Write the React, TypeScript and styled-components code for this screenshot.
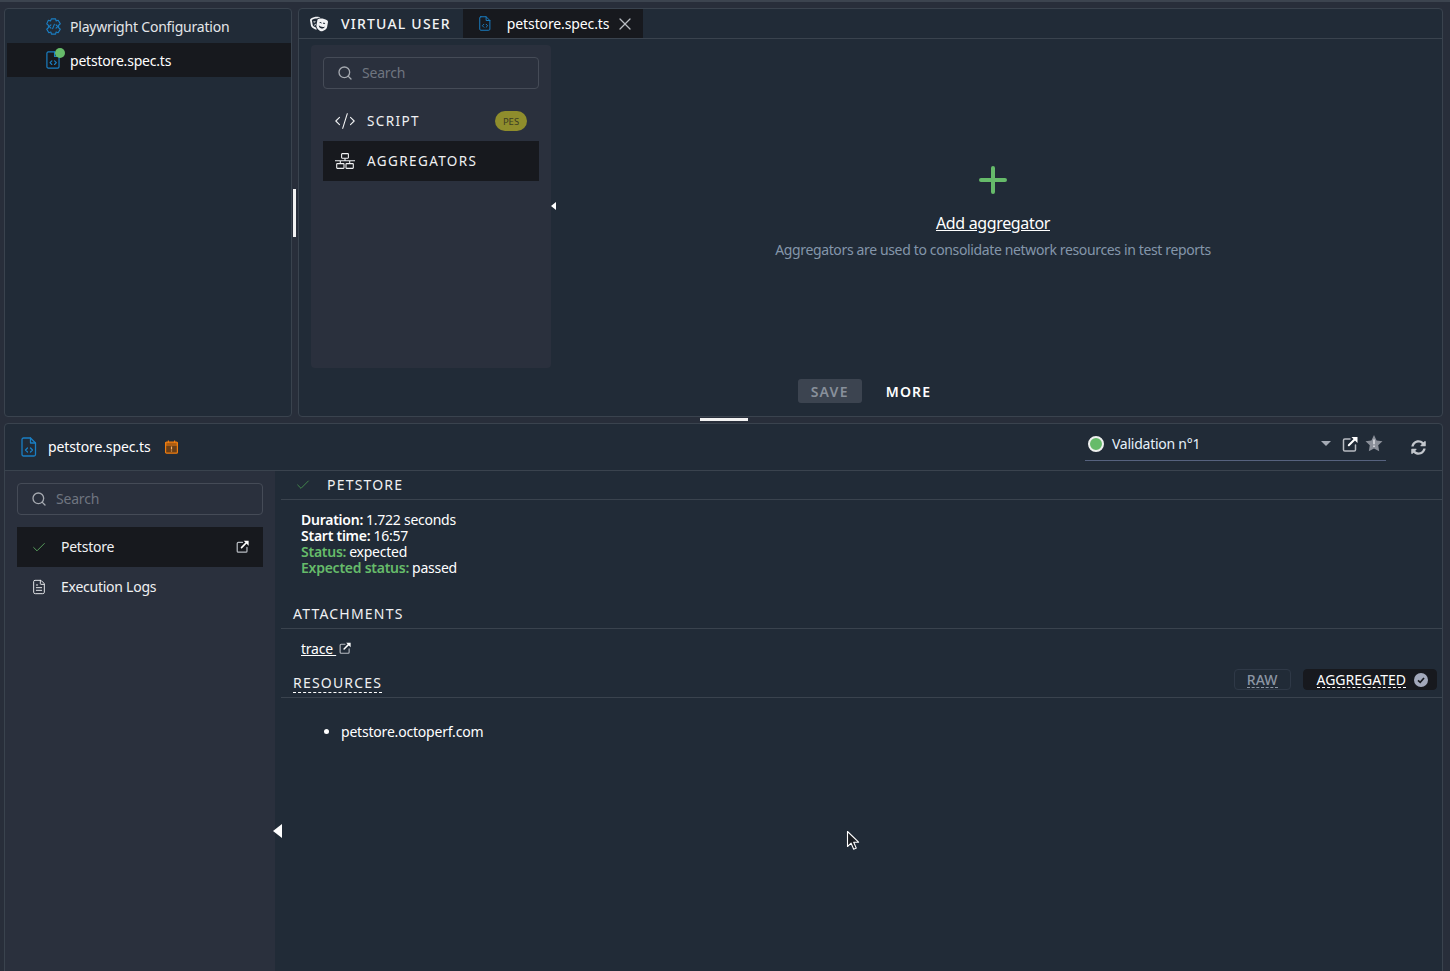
import { createGlobalStyle, styled } from "styled-components";
import { Check, CodeXml, FileText, Search, X } from "lucide-react";
import { FaTheaterMasks, FaSyncAlt } from "react-icons/fa";

const GlobalStyle = createGlobalStyle`
  html, body {
    margin: 0;
    height: 100%;
    background: #282e3a;
    overflow: hidden;
  }
  body {
    font-family: "Noto Sans", "Open Sans", sans-serif;
    font-size: 14px;
    color: #fff;
  }
  * { box-sizing: border-box; }
`;

const Page = styled.div`
  position: relative;
  width: 1450px;
  height: 971px;
  padding: 6px 7px 0 4px;
  border-top: 2px solid #3c444f;
  display: flex;
  flex-direction: column;
  gap: 6px;
  overflow: hidden;
`;

const TopRow = styled.div`
  height: 409px;
  display: flex;
  gap: 6px;
  flex-shrink: 0;
`;

const Panel = styled.section`
  background: #212b37;
  border: 1px solid #3a434e;
  border-radius: 4px;
  display: flex;
  flex-direction: column;
  overflow: hidden;
`;

const TreePanel = styled(Panel)`
  width: 288px;
  padding: 0 0 0 2px;
`;

const TreeRow = styled.div<{ $active?: boolean }>`
  height: 34px;
  padding-left: 38px;
  display: flex;
  align-items: center;
  gap: 8px;
  letter-spacing: -0.2px;
  color: ${(p) => (p.$active ? "#fff" : "#e4e6e9")};
  background: ${(p) => (p.$active ? "#17191e" : "transparent")};
`;

const IconBadge = styled.span`
  position: relative;
  display: flex;
  width: 17px;
  justify-content: center;
  &::after {
    content: "";
    position: absolute;
    top: -3px;
    right: -3px;
    width: 10px;
    height: 10px;
    border-radius: 50%;
    background: #66bb6a;
  }
`;

const EditorPanel = styled(Panel)`
  flex: 1;
`;

const TabBar = styled.div`
  height: 30px;
  flex-shrink: 0;
  display: flex;
  border-bottom: 1px solid #3a434e;
`;

const Tab = styled.div<{ $active?: boolean }>`
  height: 29px;
  display: flex;
  align-items: center;
  background: ${(p) => (p.$active ? "#17191e" : "transparent")};
  padding: ${(p) => (p.$active ? "0 8px 0 16px" : "0 12px 0 11px")};
  gap: ${(p) => (p.$active ? "16px" : "13px")};
`;

const TabTitle = styled.span`
  font-size: 14px;
  font-weight: 500;
  letter-spacing: 1.2px;
  color: #f2f3f5;
`;

const TabName = styled.span`
  letter-spacing: -0.12px;
  margin-right: -10px;
`;

const EditorBody = styled.div`
  flex: 1;
  display: flex;
  min-height: 0;
  padding: 6px 0 0 12px;
`;

const Sidebar = styled.aside`
  position: relative;
  width: 240px;
  height: 323px;
  flex-shrink: 0;
  background: #2a303d;
  border-radius: 4px;
  padding: 12px;
`;

const SearchBox = styled.div`
  height: 32px;
  border: 1px solid #454b57;
  border-radius: 4px;
  display: flex;
  align-items: center;
  gap: 9px;
  padding: 0 0 2px 13px;
  color: #6f7580;
  font-size: 14px;
  letter-spacing: -0.2px;
  margin-bottom: 12px;
  svg { color: #a5a9b0; margin-top: 2px; }
`;

const NavItem = styled.div<{ $active?: boolean }>`
  height: 40px;
  display: flex;
  align-items: center;
  padding: 0 12px 0 11px;
  background: ${(p) => (p.$active ? "#17191e" : "transparent")};
  color: #f0f1f3;
`;

const NavIcon = styled.span`
  width: 22px;
  margin-right: 11px;
  display: flex;
  justify-content: center;
`;

const NavCaps = styled.span`
  flex: 1;
  letter-spacing: 1.4px;
  font-size: 13.5px;
`;

const Pes = styled.span`
  width: 32px;
  height: 20px;
  border-radius: 10px;
  background: #8f8d2c;
  color: #3b3c24;
  font-size: 9.5px;
  display: flex;
  align-items: center;
  justify-content: center;
`;

const CollapseArrow = styled.span`
  position: absolute;
  width: 0;
  height: 0;
  border-style: solid;
  border-color: transparent #fff transparent transparent;
`;

const SidebarArrow = styled(CollapseArrow)`
  right: -5px;
  top: 157px;
  border-width: 4px 5px 4px 0;
`;

const EditorMain = styled.div`
  flex: 1;
  display: flex;
  flex-direction: column;
  align-items: center;
  padding: 121px 7px 0 0;
`;

const AddLink = styled.a`
  margin-top: 18px;
  font-size: 16px;
  line-height: 22px;
  letter-spacing: -0.35px;
  text-decoration: underline;
  color: #fff;
`;

const Hint = styled.p`
  margin: 6px 0 0;
  line-height: 20px;
  color: #8496aa;
  letter-spacing: -0.36px;
`;

const Actions = styled.div`
  margin-top: 119px;
  margin-right: 257px;
  display: flex;
  align-items: center;
  gap: 24px;
`;

const SaveButton = styled.span`
  width: 64px;
  height: 24px;
  border-radius: 3px;
  background: #3c4450;
  color: #88909b;
  font-size: 14px;
  font-weight: 600;
  letter-spacing: 1.2px;
  display: flex;
  align-items: center;
  justify-content: center;
`;

const MoreButton = styled.span`
  font-size: 14px;
  font-weight: 600;
  letter-spacing: 1.2px;
`;

const ResultPanel = styled(Panel)`
  flex: 1;
  margin-bottom: -6px;
`;

const ResultHeader = styled.header`
  height: 47px;
  flex-shrink: 0;
  display: flex;
  align-items: center;
  padding: 0 16px 0 16px;
  border-bottom: 1px solid #3a434e;
`;

const HeaderName = styled.span`
  margin: 0 0 2px 11px;
  letter-spacing: -0.12px;
`;

const CalendarSlot = styled.span`
  margin-left: 15px;
  display: flex;
`;

const Selector = styled.div`
  margin: 0 0 6px auto;
  width: 301px;
  height: 34px;
  border-bottom: 1px solid #56627f;
  display: flex;
  align-items: center;
  padding: 0 3px 0 3px;
  color: #e6f1fa;
  letter-spacing: -0.25px;
`;

const StatusDot = styled.span`
  width: 16px;
  height: 16px;
  border-radius: 50%;
  background: #66bb6a;
  border: 2px solid #eef0ee;
  margin-right: 8px;
`;

const SelectorName = styled.span`
  flex: 1;
`;

const Caret = styled.span`
  width: 0;
  height: 0;
  border-style: solid;
  border-width: 5px 5px 0;
  border-color: #a5abb5 transparent transparent;
  margin-right: 11px;
`;

const SelectorIcons = styled.span`
  display: flex;
  align-items: center;
  gap: 7px;
`;

const RefreshSlot = styled.span`
  margin-left: 25px;
  display: flex;
  color: #c2c6cc;
`;

const ResultBody = styled.div`
  flex: 1;
  display: flex;
  min-height: 0;
`;

const ResultSidebar = styled.aside`
  position: relative;
  width: 270px;
  flex-shrink: 0;
  background: #2a303d;
  padding: 12px;
`;

const ResultArrow = styled(CollapseArrow)`
  right: -7px;
  top: 353px;
  border-width: 7px 9px 7px 0;
`;

const ResultItem = styled.div<{ $active?: boolean }>`
  height: 40px;
  display: flex;
  align-items: center;
  padding: 0 14px 2px 14px;
  letter-spacing: -0.25px;
  background: ${(p) => (p.$active ? "#17191e" : "transparent")};
  color: #f0f1f3;
`;

const ResultIcon = styled.span`
  width: 16px;
  margin: 2px 14px 0 0;
  display: flex;
  justify-content: center;
`;

const ResultLabel = styled.span`
  flex: 1;
`;

const Report = styled.div`
  flex: 1;
  padding-left: 6px;
  min-width: 0;
`;

const SectionHead = styled.div<{ $height: number; $inset?: number; $gap?: number }>`
  height: ${(p) => p.$height}px;
  display: flex;
  align-items: center;
  gap: ${(p) => p.$gap ?? 0}px;
  padding-left: ${(p) => p.$inset ?? 12}px;
  padding-right: 5px;
  border-bottom: 1px solid #3a434e;
`;

const SectionTitle = styled.h3<{ $dashed?: boolean }>`
  margin: 0;
  font-size: 14px;
  font-weight: 400;
  letter-spacing: 1.2px;
  line-height: 18px;
  color: #f0f1f3;
  border-bottom: ${(p) => (p.$dashed ? "1px dashed #fff" : "none")};
`;

const DetailList = styled.div`
  padding: 12px 0 0 20px;
  height: 100px;
  letter-spacing: -0.25px;
`;

const DetailLine = styled.div`
  display: flex;
  gap: 3px;
  line-height: 16px;
`;

const DetailKey = styled.strong<{ $ok?: boolean }>`
  font-weight: 600;
  color: ${(p) => (p.$ok ? "#66bb6a" : "#fff")};
`;

const DetailValue = styled.span`
  color: #fff;
`;

const TraceRow = styled.div`
  height: 40px;
  padding: 0 0 2px 20px;
  display: flex;
  align-items: center;
  gap: 3px;
`;

const TraceLink = styled.a`
  letter-spacing: -0.25px;
  text-decoration: underline;
  white-space: pre;
`;

const Toggles = styled.div`
  margin-left: auto;
  margin-top: -7px;
  display: flex;
  gap: 12px;
`;

const Toggle = styled.span<{ $active?: boolean }>`
  height: 21px;
  border-radius: 4px;
  border: 1px solid ${(p) => (p.$active ? "#17191e" : "#2f3947")};
  background: ${(p) => (p.$active ? "#17191e" : "transparent")};
  color: ${(p) => (p.$active ? "#fff" : "#8b95a3")};
  padding: ${(p) => (p.$active ? "0 8px 0 13px" : "0 12px")};
  display: flex;
  align-items: center;
  gap: 8px;
  letter-spacing: 0;
  font-weight: ${(p) => (p.$active ? 400 : 500)};
  span { border-bottom: 1px dashed currentColor; line-height: 15px; }
`;

const ResourceList = styled.ul`
  margin: 25px 0 0;
  padding-left: 60px;
  letter-spacing: -0.2px;
  line-height: 18px;
`;

const Handle = styled.span`
  position: absolute;
  background: #f2f2f2;
`;

const VerticalHandle = styled(Handle)`
  left: 293px;
  top: 187px;
  width: 3px;
  height: 48px;
`;

const HorizontalHandle = styled(Handle)`
  left: 700px;
  top: 416px;
  width: 48px;
  height: 3px;
`;

const CursorMark = styled.svg`
  position: absolute;
  left: 846px;
  top: 828px;
`;

function FileCode({ size = 16 }: { size?: number }) {
  return (
    <svg width={size * 0.8} height={size} viewBox="0 0 16 20" fill="none" stroke="#1a7fc4" strokeWidth="1.3" strokeLinejoin="round" strokeLinecap="round">
      <path d="M2.5 1h7l5 5v11.5a1.5 1.5 0 0 1-1.5 1.5H2.5A1.5 1.5 0 0 1 1 17.5v-15A1.5 1.5 0 0 1 2.5 1z" />
      <path d="M9.5 1v5h5" />
      <path d="M6.5 11l-2 2 2 2M9.5 11l2 2-2 2" />
    </svg>
  );
}

function GearCode() {
  return (
    <svg width="17" height="17" viewBox="0 0 20 20" fill="none" stroke="#1a7fc4" strokeWidth="1.3" strokeLinejoin="round" strokeLinecap="round">
      <path d="M7.5 1h5l.5 2.5 2.5-.9 2.5 4.3-2 1.6v3l2 1.6-2.5 4.3-2.5-.9-.5 2.5h-5l-.5-2.5-2.5.9-2.5-4.3 2-1.6v-3l-2-1.6L4 2.6l2.5.9z" />
      <path d="M7 8l-2 2 2 2M13 8l2 2-2 2M11 7.5l-2 5" />
    </svg>
  );
}

function NetworkIcon() {
  return (
    <svg width="20" height="16" viewBox="0 0 20 16" fill="none" stroke="#f0f1f3" strokeWidth="1.1">
      <rect x="6.6" y="0.6" width="6.8" height="4.6" rx="0.6" />
      <rect x="1.7" y="10.6" width="7.3" height="4.8" rx="0.6" />
      <rect x="11" y="10.6" width="7.3" height="4.8" rx="0.6" />
      <path d="M0 7.8h20M10 5.2v2.6M5.3 7.8v2.8M14.7 7.8v2.8" />
    </svg>
  );
}

function ExternalIcon({ size = 16, color = "#b8bcc2" }: { size?: number; color?: string }) {
  return (
    <svg width={size} height={size} viewBox="0 0 16 16" fill="none" strokeLinecap="round">
      <path d="M8 3H2.8A1.3 1.3 0 0 0 1.5 4.3v9.4A1.3 1.3 0 0 0 2.8 15h9.4a1.3 1.3 0 0 0 1.3-1.3V9" stroke={color} strokeWidth="1.5" />
      <path d="M6.8 9.3L13.6 2.5" stroke="#fff" strokeWidth="2" />
      <path d="M9.5 1h6v6z" fill="#fff" />
    </svg>
  );
}

function StarWarn() {
  return (
    <svg width="18" height="17" viewBox="0 0 18 17">
      <path d="M9 0l2.6 5.4 5.9.8-4.3 4.1 1 5.9L9 13.4l-5.2 2.8 1-5.9L.5 6.2l5.9-.8z" fill="#8a8f99" />
      <path d="M9 4.6v4.6M9 10.4v1.6" stroke="#e4e6ea" strokeWidth="1.4" />
    </svg>
  );
}

function CalendarWarn() {
  return (
    <svg width="13" height="14" viewBox="0 0 13 14" fill="none">
      <path d="M1.6 2.2h9.8a1 1 0 0 1 1 1v9a1 1 0 0 1-1 1H1.6a1 1 0 0 1-1-1v-9a1 1 0 0 1 1-1z" stroke="#ef7d0f" strokeWidth="1.2" fill="#6b3f16" />
      <path d="M.6 3h11.8v2H.6zM3.4.6v2.4M9.6.6v2.4" stroke="#ef7d0f" strokeWidth="1.2" />
      <path d="M6.5 6.4v3M6.5 10.4v1.2" stroke="#f6b26b" strokeWidth="1.2" />
    </svg>
  );
}

function CheckCircle() {
  return (
    <svg width="14" height="14" viewBox="0 0 14 14" fill="none">
      <circle cx="7" cy="7" r="7" fill="#a3a9bb" />
      <path d="M4 7.3l2.2 2L10 5" stroke="#17191e" strokeWidth="1.7" />
    </svg>
  );
}

export default function App() {
  return (
    <>
      <GlobalStyle />
      <Page>
        <TopRow>
          <TreePanel>
            <TreeRow>
              <GearCode />
              Playwright Configuration
            </TreeRow>
            <TreeRow $active>
              <IconBadge>
                <FileCode size={18} />
              </IconBadge>
              petstore.spec.ts
            </TreeRow>
          </TreePanel>

          <EditorPanel>
            <TabBar>
              <Tab>
                <FaTheaterMasks size={18} color="#f2f3f5" />
                <TabTitle>VIRTUAL USER</TabTitle>
              </Tab>
              <Tab $active>
                <FileCode size={15} />
                <TabName>petstore.spec.ts</TabName>
                <X size={20} color="#b8bcc2" strokeWidth={1.5} />
              </Tab>
            </TabBar>
            <EditorBody>
              <Sidebar>
                <SearchBox>
                  <Search size={16} />
                  Search
                </SearchBox>
                <NavItem>
                  <NavIcon>
                    <CodeXml size={22} strokeWidth={1.2} />
                  </NavIcon>
                  <NavCaps>SCRIPT</NavCaps>
                  <Pes>PES</Pes>
                </NavItem>
                <NavItem $active>
                  <NavIcon>
                    <NetworkIcon />
                  </NavIcon>
                  <NavCaps>AGGREGATORS</NavCaps>
                </NavItem>
                <SidebarArrow />
              </Sidebar>
              <EditorMain>
                <svg width="28" height="28" viewBox="0 0 28 28" stroke="#66bb6a" strokeWidth="4" strokeLinecap="round">
                  <path d="M14 2v24M2 14h24" />
                </svg>
                <AddLink>Add aggregator</AddLink>
                <Hint>Aggregators are used to consolidate network resources in test reports</Hint>
                <Actions>
                  <SaveButton>SAVE</SaveButton>
                  <MoreButton>MORE</MoreButton>
                </Actions>
              </EditorMain>
            </EditorBody>
          </EditorPanel>
        </TopRow>

        <ResultPanel>
          <ResultHeader>
            <FileCode size={20} />
            <HeaderName>petstore.spec.ts</HeaderName>
            <CalendarSlot>
              <CalendarWarn />
            </CalendarSlot>
            <Selector>
              <StatusDot />
              <SelectorName>Validation n°1</SelectorName>
              <Caret />
              <SelectorIcons>
                <ExternalIcon />
                <StarWarn />
              </SelectorIcons>
            </Selector>
            <RefreshSlot>
              <FaSyncAlt size={15} />
            </RefreshSlot>
          </ResultHeader>
          <ResultBody>
            <ResultSidebar>
              <SearchBox>
                <Search size={16} />
                Search
              </SearchBox>
              <ResultItem $active>
                <ResultIcon>
                  <Check size={17} color="#66bb6a" strokeWidth={1.2} />
                </ResultIcon>
                <ResultLabel>Petstore</ResultLabel>
                <ExternalIcon size={13} />
              </ResultItem>
              <ResultItem>
                <ResultIcon>
                  <FileText size={18} strokeWidth={1.4} />
                </ResultIcon>
                <ResultLabel>Execution Logs</ResultLabel>
              </ResultItem>
              <ResultArrow />
            </ResultSidebar>
            <Report>
              <SectionHead $height={29} $inset={14} $gap={16}>
                <Check size={16} color="#4a9e50" strokeWidth={1.2} />
                <SectionTitle>PETSTORE</SectionTitle>
              </SectionHead>
              <DetailList>
                <DetailLine>
                  <DetailKey>Duration:</DetailKey>
                  <DetailValue>1.722 seconds</DetailValue>
                </DetailLine>
                <DetailLine>
                  <DetailKey>Start time:</DetailKey>
                  <DetailValue>16:57</DetailValue>
                </DetailLine>
                <DetailLine>
                  <DetailKey $ok>Status:</DetailKey>
                  <DetailValue>expected</DetailValue>
                </DetailLine>
                <DetailLine>
                  <DetailKey $ok>Expected status:</DetailKey>
                  <DetailValue>passed</DetailValue>
                </DetailLine>
              </DetailList>
              <SectionHead $height={29}>
                <SectionTitle>ATTACHMENTS</SectionTitle>
              </SectionHead>
              <TraceRow>
                <TraceLink>trace </TraceLink>
                <ExternalIcon size={12} />
              </TraceRow>
              <SectionHead $height={29}>
                <SectionTitle $dashed>RESOURCES</SectionTitle>
                <Toggles>
                  <Toggle>
                    <span>RAW</span>
                  </Toggle>
                  <Toggle $active>
                    <span>AGGREGATED</span>
                    <CheckCircle />
                  </Toggle>
                </Toggles>
              </SectionHead>
              <ResourceList>
                <li>petstore.octoperf.com</li>
              </ResourceList>
            </Report>
          </ResultBody>
        </ResultPanel>

        <VerticalHandle />
        <HorizontalHandle />
        <CursorMark width="14" height="21" viewBox="0 0 14 21">
          <path d="M1.5 1.5v15l3.6-3.3 2.6 6 2.6-1.1-2.6-5.9h4.9z" fill="#1a1d22" stroke="#fff" strokeWidth="1.1" strokeLinejoin="round" />
        </CursorMark>
      </Page>
    </>
  );
}
